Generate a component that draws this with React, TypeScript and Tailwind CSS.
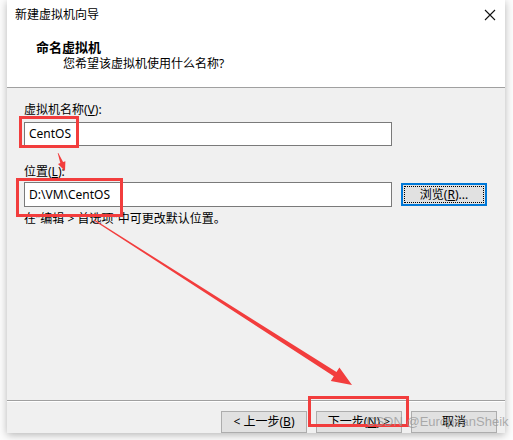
import React from 'react';

function Btn({ children, className = '' }: { children: React.ReactNode; className?: string }) {
  return (
    <div
      className={`flex h-[22px] w-[86px] items-center justify-center border border-[#adadad] bg-[#e1e1e1] text-[12px] leading-[16px] text-black ${className}`}
    >
      {children}
    </div>
  );
}

function Arrows() {
  return (
    <svg className="pointer-events-none absolute left-0 top-0" width="513" height="440" viewBox="0 0 513 440">
      <polygon
        fill="#f23d3d"
        points="57.7,153.1 60.3,163.1 58,164.1 65,171 65.4,161.2 63.1,162.1 58.3,152.9"
      />
      <polygon
        fill="#f23d3d"
        points="93.7,220.4 333.8,376.3 330.8,380.9 352,385 339.4,367.5 336.5,372.1 94.3,219.6"
      />
    </svg>
  );
}

export default function App() {
  return (
    <div className="relative h-[440px] w-[513px] overflow-hidden bg-[#fcfcfc] font-['Noto_Sans','Noto_Sans_CJK_SC',sans-serif] text-black">
      <div className="ml-[7px] flex h-[433px] w-[498px] flex-col bg-[#f0f0f0] shadow-[0_2px_8px_rgba(0,0,0,0.28)]">
        {/* title bar */}
        <div className="flex h-[30px] items-center justify-between bg-white pl-[8px] pr-[9px]">
          <span className="text-[12px] leading-[16px]">新建虚拟机向导</span>
          <svg width="12" height="12" viewBox="0 0 12 12">
            <path d="M1 1L11 11M11 1L1 11" stroke="#111" strokeWidth="1.1" />
          </svg>
        </div>

        {/* header */}
        <div className="h-[58px] border-b border-[#a0a0a0] bg-white">
          <div className="pl-[29px] pt-[8px] text-[13px] font-bold leading-[18px]">命名虚拟机</div>
          <div className="pl-[56px] text-[12px] leading-[16px]">您希望该虚拟机使用什么名称?</div>
        </div>

        {/* body */}
        <div className="flex flex-1 flex-col border-b border-[#a0a0a0] pl-[17px] pt-[14px]">
          <div className="text-[12px] leading-[16px]">
            虚拟机名称(<span className="underline">V</span>):
          </div>
          <div className="mt-[4px] flex h-[24px] w-[368px] items-center border border-[#7a7a7a] bg-white pl-[4px] text-[12px]">
            CentOS
          </div>
          <div className="mt-[18px] text-[12px] leading-[16px]">
            位置(<span className="underline">L</span>):
          </div>
          <div className="mt-[2px] flex items-start gap-[9px]">
            <div className="flex h-[25px] w-[368px] items-center border border-[#7a7a7a] bg-white pl-[4px] text-[12px]">
              D:\VM\CentOS
            </div>
            <div className="mt-[1px] flex h-[23px] w-[86px] items-center justify-center border-2 border-[#0078d7] bg-[#e1e1e1] p-[1px]">
              <div className="flex h-full w-full items-center justify-center border border-dotted border-black text-[12px] leading-[16px]">
                浏览(<span className="underline">R</span>)...
              </div>
            </div>
          </div>
          <div className="mt-[4px] text-[12px] leading-[16px]">在“编辑 &gt; 首选项”中可更改默认位置。</div>
        </div>

        {/* buttons */}
        <div className="flex justify-end gap-[9px] border-t border-white pr-[8px] pt-[9px]">
          <Btn>
            &lt; 上一步(<span className="underline">B</span>)
          </Btn>
          <Btn>
            下一步(<span className="underline">N</span>) &gt;
          </Btn>
          <Btn>取消</Btn>
        </div>
      </div>

      {/* annotations */}
      <div className="pointer-events-none absolute left-[19px] top-[116px] h-[32px] w-[60px] border-[3px] border-[#f23d3d]" />
      <div className="pointer-events-none absolute left-[16px] top-[178px] h-[39px] w-[107px] border-[3px] border-[#f23d3d]" />
      <div className="pointer-events-none absolute left-[308px] top-[396px] h-[31px] w-[101px] border-[3px] border-[#f23d3d]" />
      <Arrows />
      <div className="pointer-events-none absolute left-[366px] top-[413px] text-[13px] leading-[18px] text-[rgba(150,150,150,0.75)] font-['Liberation_Sans',sans-serif]">
        CSDN @EuropeanSheik
      </div>
    </div>
  );
}
